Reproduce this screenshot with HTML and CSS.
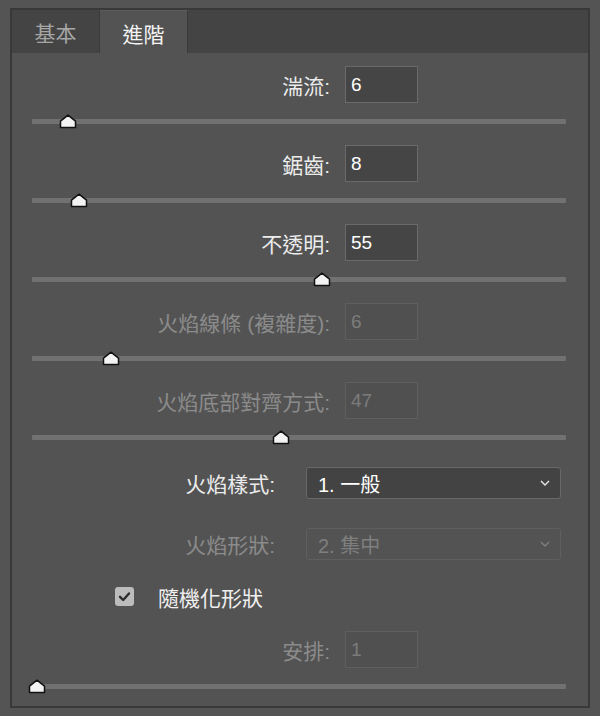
FILE: index.html
```html
<!DOCTYPE html>
<html lang="zh-Hant">
<head>
<meta charset="utf-8">
<title>火焰</title>
<link rel="stylesheet" href="styles.css">
</head>
<body>
<div class="window">
  <div class="tabs">
    <div class="tab">基本</div>
    <div class="tab active">進階</div>
  </div>
  <div class="panel">
    <div class="field">
      <div class="num-row"><span class="label">湍流:</span><div class="num-box">6</div></div>
      <div class="slider"><div class="track"></div><svg class="thumb" style="left:6.7%" viewBox="0 0 18 15"><path d="M1.5 13.5V7.2L9 1.2L16.5 7.2V13.5Z"/></svg></div>
    </div>
    <div class="field">
      <div class="num-row"><span class="label">鋸齒:</span><div class="num-box">8</div></div>
      <div class="slider"><div class="track"></div><svg class="thumb" style="left:8.8%" viewBox="0 0 18 15"><path d="M1.5 13.5V7.2L9 1.2L16.5 7.2V13.5Z"/></svg></div>
    </div>
    <div class="field">
      <div class="num-row"><span class="label">不透明:</span><div class="num-box">55</div></div>
      <div class="slider"><div class="track"></div><svg class="thumb" style="left:54.3%" viewBox="0 0 18 15"><path d="M1.5 13.5V7.2L9 1.2L16.5 7.2V13.5Z"/></svg></div>
    </div>
    <div class="field disabled">
      <div class="num-row"><span class="label">火焰線條 (複雜度):</span><div class="num-box">6</div></div>
      <div class="slider"><div class="track"></div><svg class="thumb" style="left:14.8%" viewBox="0 0 18 15"><path d="M1.5 13.5V7.2L9 1.2L16.5 7.2V13.5Z"/></svg></div>
    </div>
    <div class="field disabled">
      <div class="num-row"><span class="label">火焰底部對齊方式:</span><div class="num-box">47</div></div>
      <div class="slider"><div class="track"></div><svg class="thumb" style="left:46.6%" viewBox="0 0 18 15"><path d="M1.5 13.5V7.2L9 1.2L16.5 7.2V13.5Z"/></svg></div>
    </div>

    <div class="select-row first">
      <span class="label">火焰樣式:</span>
      <div class="select"><span>1. 一般</span><svg class="chevron" viewBox="0 0 10 6"><path d="M1 1L5 5L9 1"/></svg></div>
    </div>
    <div class="select-row disabled">
      <span class="label">火焰形狀:</span>
      <div class="select"><span>2. 集中</span><svg class="chevron" viewBox="0 0 10 6"><path d="M1 1L5 5L9 1"/></svg></div>
    </div>

    <div class="check-row">
      <span class="checkbox"><svg viewBox="0 0 19 19"><path d="M5 9.8L8.2 13L14 6.5"/></svg></span>
      <span class="check-label">隨機化形狀</span>
    </div>

    <div class="field disabled last">
      <div class="num-row"><span class="label">安排:</span><div class="num-box">1</div></div>
      <div class="slider"><div class="track"></div><svg class="thumb" style="left:1%" viewBox="0 0 18 15"><path d="M1.5 13.5V7.2L9 1.2L16.5 7.2V13.5Z"/></svg></div>
    </div>
  </div>
</div>
</body>
</html>
```

FILE: styles.css
```css
* {
  box-sizing: border-box;
}

html,
body {
  margin: 0;
  background: #545454;
}

body {
  padding: 8px 10px 0;
  font-family: "Liberation Sans", "Noto Sans CJK TC", sans-serif;
  color: #ececec;
}

.window {
  border: 2px solid #393939;
  height: 700px;
  display: flex;
  flex-direction: column;
}

/* tab strip */
.tabs {
  display: flex;
  height: 43px;
  background: #444444;
  flex: none;
}

.tab {
  width: 88px;
  display: flex;
  align-items: center;
  justify-content: center;
  padding-top: 1px;
  font-size: 21px;
  color: #a6a6a6;
  border-right: 1px solid #3c3c3c;
}

.tab.active {
  background: #535353;
  color: #f4f4f4;
  border-top: 1px solid #5c5c5c;
  border-right: 1px solid #3a3a3a;
}

/* panel body */
.panel {
  flex: 1;
  background: #535353;
  padding: 13px 22px 0 20px;
  display: flex;
  flex-direction: column;
}

.field {
  margin-bottom: 16px;
}

.num-row {
  display: flex;
  align-items: center;
  height: 37px;
}

.num-row .label {
  width: 298px;
  text-align: right;
  font-size: 21px;
  margin-right: 15px;
  white-space: nowrap;
}

.num-box {
  width: 73px;
  height: 37px;
  background: #454545;
  border: 1px solid #6a6a6a;
  padding: 0 5px;
  font-size: 19px;
  line-height: 35px;
  color: #ffffff;
}

.slider {
  position: relative;
  height: 15px;
  margin-top: 11px;
}

.track {
  position: absolute;
  left: 0;
  right: 0;
  top: 5px;
  height: 5px;
  background: #717171;
  border-radius: 1px;
}

.thumb {
  position: absolute;
  top: 0;
  width: 18px;
  height: 15px;
  transform: translateX(-50%);
}

.thumb path {
  fill: #f3f3f3;
  stroke: #111111;
  stroke-width: 1.5;
  stroke-linejoin: round;
}

/* disabled fields */
.disabled .label {
  color: #8b8b8b;
}

.disabled .num-box {
  background: #505050;
  border-color: #5f5f5f;
  color: #7c7c7c;
}

/* dropdowns */
.select-row {
  display: flex;
  align-items: center;
  height: 32px;
  margin-top: 29px;
}

.select-row.first {
  margin-top: 6px;
}

.select-row .label {
  width: 243px;
  text-align: right;
  font-size: 21px;
  margin-right: 31px;
}

.select {
  width: 255px;
  height: 32px;
  display: flex;
  align-items: center;
  justify-content: space-between;
  padding: 0 10px 0 11px;
  background: #434343;
  border: 1px solid #686868;
  border-radius: 3px;
  font-size: 20px;
  color: #ffffff;
}

.chevron {
  width: 10px;
  height: 6px;
}

.chevron path {
  fill: none;
  stroke: #e6e6e6;
  stroke-width: 1.4;
}

.select-row.disabled .select {
  background: #535353;
  border-color: #5f5f5f;
  color: #7f7f7f;
}

.select-row.disabled .chevron path {
  stroke: #7f7f7f;
}

/* checkbox */
.check-row {
  display: flex;
  align-items: center;
  height: 19px;
  margin-top: 27px;
  padding-left: 83px;
}

.checkbox {
  width: 19px;
  height: 19px;
  background: #bcbcbc;
  border-radius: 3px;
  margin-right: 24px;
  display: block;
}

.checkbox svg {
  width: 19px;
  height: 19px;
  display: block;
}

.checkbox path {
  fill: none;
  stroke: #2e2e2e;
  stroke-width: 2.4;
  stroke-linecap: round;
  stroke-linejoin: round;
}

.check-label {
  font-size: 21px;
  color: #f0f0f0;
}

.field.last {
  margin-top: 25px;
  margin-bottom: 0;
}
```
